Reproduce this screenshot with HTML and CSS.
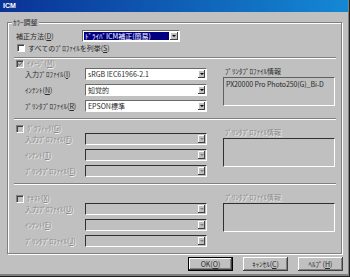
FILE: index.html
```html
<!DOCTYPE html>
<html lang="ja">
<head>
    <meta charset="UTF-8">
    <title>ICM</title>
    <link rel="stylesheet" href="styles.css">
</head>
<body>

    <!-- Dialog Window -->
    <div class="window">
        <div class="titlebar">ICM</div>

        <!-- Color Adjustment Group -->
        <div class="group">
            <div class="group-title">ｶﾗｰ調整</div>

            <div class="method-row">
                <span class="method-label">補正方法(<u>D</u>)</span>
                <div class="combo combo-method">
                    <span class="combo-value">ﾄﾞﾗｲﾊﾞICM補正(簡易)</span>
                    <span class="drop"></span>
                </div>
            </div>

            <div class="check-row">
                <span class="checkbox"></span>
                <span>すべてのﾌﾟﾛﾌｧｲﾙを列挙(<u>S</u>)</span>
            </div>

            <div class="separator"></div>

            <!-- Image -->
            <div class="section section-image">
                <div class="section-left">
                    <div class="check-row header disabled">
                        <span class="checkbox checked">
                            <svg width="6" height="6" viewBox="0 0 6 6"><path d="M0.8 2.6 L2.3 4.2 L5.3 1.2" fill="none" stroke="#808080" stroke-width="1.2"/></svg>
                        </span>
                        <span>ｲﾒｰｼﾞ(<u>M</u>)</span>
                    </div>
                    <div class="field">
                        <span class="field-label">入力ﾌﾟﾛﾌｧｲﾙ(<u>I</u>)</span>
                        <div class="combo"><span class="combo-value">sRGB IEC61966-2.1</span><span class="drop"></span></div>
                    </div>
                    <div class="field">
                        <span class="field-label">ｲﾝﾃﾝﾄ(<u>N</u>)</span>
                        <div class="combo"><span class="combo-value">知覚的</span><span class="drop"></span></div>
                    </div>
                    <div class="field">
                        <span class="field-label">ﾌﾟﾘﾝﾀﾌﾟﾛﾌｧｲﾙ(<u>R</u>)</span>
                        <div class="combo"><span class="combo-value">EPSON標準</span><span class="drop"></span></div>
                    </div>
                </div>
                <div class="section-right">
                    <div class="info-label">ﾌﾟﾘﾝﾀﾌﾟﾛﾌｧｲﾙ情報</div>
                    <div class="info-box"><span class="info-text">PX20000 Pro Photo250(G)_Bi-D</span></div>
                </div>
            </div>

            <div class="separator sep-gap"></div>

            <!-- Graphic -->
            <div class="section section-graphic disabled">
                <div class="section-left">
                    <div class="check-row header">
                        <span class="checkbox"></span>
                        <span>ｸﾞﾗﾌｨｯｸ(<u>G</u>)</span>
                    </div>
                    <div class="field">
                        <span class="field-label">入力ﾌﾟﾛﾌｧｲﾙ(<u>F</u>)</span>
                        <div class="combo"><span class="combo-value"></span><span class="drop"></span></div>
                    </div>
                    <div class="field">
                        <span class="field-label">ｲﾝﾃﾝﾄ(<u>T</u>)</span>
                        <div class="combo"><span class="combo-value"></span><span class="drop"></span></div>
                    </div>
                    <div class="field">
                        <span class="field-label">ﾌﾟﾘﾝﾀﾌﾟﾛﾌｧｲﾙ(<u>E</u>)</span>
                        <div class="combo"><span class="combo-value"></span><span class="drop"></span></div>
                    </div>
                </div>
                <div class="section-right">
                    <div class="info-label">ﾌﾟﾘﾝﾀﾌﾟﾛﾌｧｲﾙ情報</div>
                    <div class="info-box"></div>
                </div>
            </div>

            <div class="separator sep-gap"></div>

            <!-- Text -->
            <div class="section section-text disabled">
                <div class="section-left">
                    <div class="check-row header">
                        <span class="checkbox"></span>
                        <span>ﾃｷｽﾄ(<u>X</u>)</span>
                    </div>
                    <div class="field">
                        <span class="field-label">入力ﾌﾟﾛﾌｧｲﾙ(<u>U</u>)</span>
                        <div class="combo"><span class="combo-value"></span><span class="drop"></span></div>
                    </div>
                    <div class="field">
                        <span class="field-label">ｲﾝﾃﾝﾄ(<u>E</u>)</span>
                        <div class="combo"><span class="combo-value"></span><span class="drop"></span></div>
                    </div>
                    <div class="field">
                        <span class="field-label">ﾌﾟﾘﾝﾀﾌﾟﾛﾌｧｲﾙ(<u>J</u>)</span>
                        <div class="combo"><span class="combo-value"></span><span class="drop"></span></div>
                    </div>
                </div>
                <div class="section-right">
                    <div class="info-label">ﾌﾟﾘﾝﾀﾌﾟﾛﾌｧｲﾙ情報</div>
                    <div class="info-box"></div>
                </div>
            </div>
        </div>

        <!-- Dialog Buttons -->
        <div class="buttons">
            <button class="btn btn-default">OK(<u>O</u>)</button>
            <button class="btn">ｷｬﾝｾﾙ(<u>C</u>)</button>
            <button class="btn">ﾍﾙﾌﾟ(<u>H</u>)</button>
        </div>
    </div>

</body>
</html>
```

FILE: styles.css
```css
/* Basic Reset */
* {
    margin: 0;
    padding: 0;
    box-sizing: border-box;
}

body {
    font-family: 'Noto Sans CJK JP', sans-serif;
    font-size: 7px;
    line-height: 9px;
    color: #2a2a2a;
    background-color: #c0c0c0;
}

u {
    text-underline-offset: 1px;
}

/* Window */
.window {
    width: 350px;
    height: 277px;
    background-color: #c0c0c0;
    box-shadow: inset -1px -1px #202020, inset -2px -2px #808080, inset 0 -3px #808080;
}

.titlebar {
    height: 12px;
    padding-left: 3px;
    margin-right: 2px;
    font-family: 'Liberation Sans', sans-serif;
    font-weight: bold;
    font-size: 7px;
    line-height: 11px;
    color: #fff;
    background: linear-gradient(90deg, #0a3296, #1488d4);
}

/* Group Box */
.group {
    margin: 10px 0 0 7px;
    width: 335px;
    height: 232px;
    border: 1px solid #808080;
    box-shadow: inset 1px 1px #fff, 1px 1px #fff;
}

.group-title {
    width: fit-content;
    height: 9px;
    margin: -5px 0 0 4px;
    padding: 0 1px;
    background-color: #c0c0c0;
}

.method-row {
    display: flex;
    align-items: center;
    height: 12px;
    margin-top: 3px;
    padding-left: 8px;
}

.method-label {
    width: 66px;
}

.check-row {
    display: flex;
    align-items: center;
    height: 10px;
    margin-top: 1px;
    padding-left: 9px;
}

.check-row.header {
    height: 9px;
    margin-top: 0;
    padding-left: 0;
}

.checkbox {
    display: flex;
    align-items: center;
    justify-content: center;
    width: 8px;
    height: 8px;
    margin-right: 3px;
    background-color: #fff;
    border: 1px solid;
    border-color: #808080 #fff #fff #808080;
    box-shadow: inset 1px 1px #404040;
}

.disabled .checkbox {
    background-color: #c0c0c0;
}

.separator {
    width: 322px;
    height: 2px;
    margin: 4px 0 0 6px;
    border-top: 1px solid #808080;
    border-bottom: 1px solid #fff;
}

.sep-gap {
    margin-top: 6px;
}

/* Sections */
.section {
    display: grid;
    grid-template-columns: 191px 112px;
    column-gap: 16px;
    align-items: start;
    padding-left: 8px;
}

.section-graphic .section-left {
    padding-top: 4px;
}

.section-text .section-left {
    padding-top: 9px;
}

.disabled .check-row span,
.disabled .field-label,
.disabled .info-label,
.check-row.disabled span {
    color: #8a8a8a;
    text-shadow: 1px 1px 0 #f0f0f0;
}

.field {
    display: flex;
    align-items: center;
    height: 12px;
    margin-top: 4px;
    padding-left: 9px;
}

.header + .field {
    margin-top: 0;
}

.field-label {
    width: 60px;
    white-space: nowrap;
}

/* Combo Box */
.combo {
    display: flex;
    align-items: center;
    width: 122px;
    height: 12px;
    background-color: #fff;
    border: 1px solid;
    border-color: #6a6a6a #fff #fff #6a6a6a;
}

.disabled .combo {
    background-color: #c0c0c0;
    border-color: #303030 #fff #fff #303030;
}

.combo-value {
    flex: 1;
    padding-left: 2px;
    white-space: nowrap;
    overflow: hidden;
}

.combo-method {
    width: 98px;
}

.combo-method .combo-value {
    margin: 0 1px;
    padding-left: 1px;
    line-height: 8px;
    color: #fff;
    background-color: #000080;
}

.drop {
    display: flex;
    align-items: center;
    justify-content: center;
    width: 7px;
    height: 8px;
    margin-right: 1px;
    background-color: #c0c0c0;
    box-shadow: inset -1px -1px #404040, inset 1px 1px #fff;
}

.drop::after {
    content: "";
    border-left: 2px solid transparent;
    border-right: 2px solid transparent;
    border-top: 2px solid #000;
}

.disabled .drop::after {
    border-top-color: #808080;
}

.combo-method .drop {
    width: 8px;
}

/* Printer Profile Info */
.section-right {
    padding-top: 8px;
}

.info-label {
    height: 9px;
    padding-left: 2px;
    white-space: nowrap;
}

.info-box {
    height: 29px;
    margin-top: 1px;
    padding: 2px 0 0 2px;
    border: 1px solid;
    border-color: #606060 #fff #fff #606060;
}

.info-text {
    display: block;
    line-height: 9px;
    letter-spacing: -0.1px;
    white-space: nowrap;
}

.disabled .info-box {
    border-color: #303030 #fff #fff #303030;
}

/* Buttons */
.buttons {
    display: flex;
    justify-content: flex-end;
    gap: 10px;
    margin-top: 3px;
    padding-right: 7px;
}

.btn {
    width: 45px;
    height: 14px;
    font-family: inherit;
    font-size: 7px;
    line-height: 12px;
    color: #2a2a2a;
    background-color: #c0c0c0;
    border: none;
    box-shadow: inset -1px -1px #404040, inset 1px 1px #fff, inset -2px -2px #808080;
}

.btn-default {
    border: 1px solid #000;
}
```
